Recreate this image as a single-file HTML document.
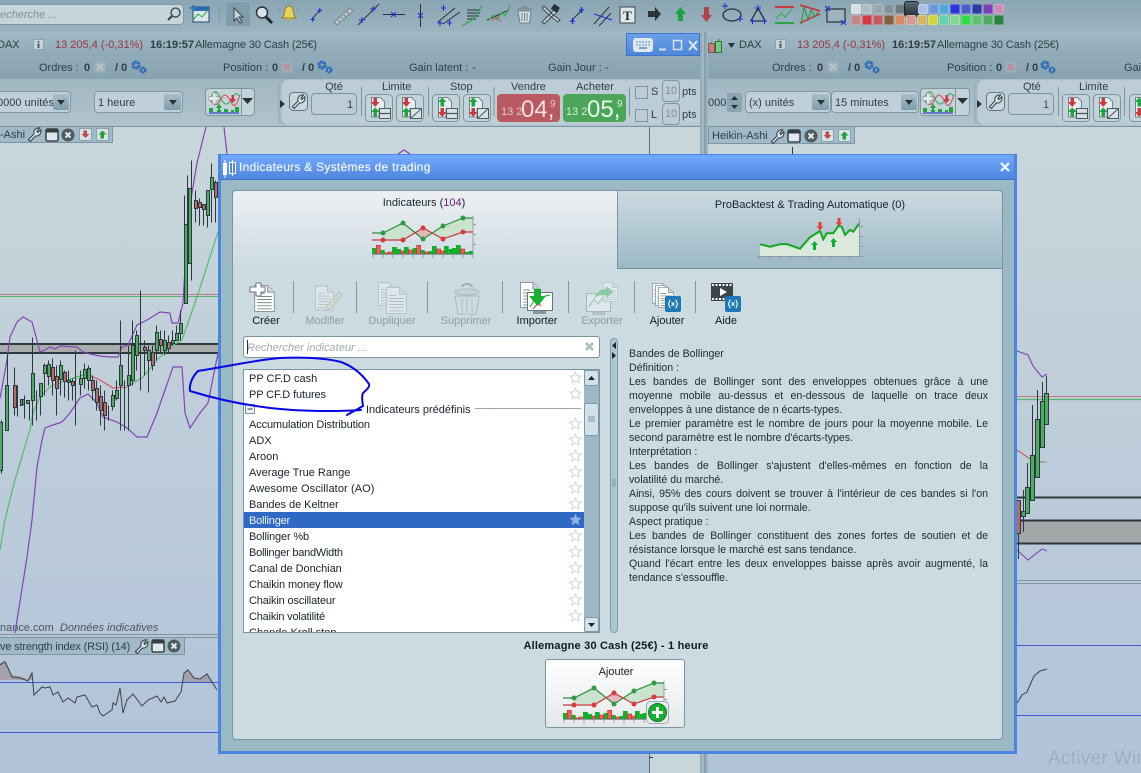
<!DOCTYPE html>
<html><head><meta charset="utf-8"><title>Indicateurs</title>
<style>
html,body{margin:0;padding:0;width:1141px;height:773px;overflow:hidden;background:#b8c9d6}
body{position:relative;font-family:"Liberation Sans",sans-serif;font-size:11px;color:#2f3e46}
.a,.t{position:absolute}
.t{white-space:nowrap;line-height:14px;font-size:11px}
.t,.lbl,.line{margin-top:1px}
svg{position:absolute;left:0;top:0;overflow:visible}
.b{font-weight:bold}
.sel{position:absolute;background:#c0d0d8;border:1px solid #7f99a5;border-radius:4px;box-sizing:border-box}
.drop{position:absolute;background:linear-gradient(#a9bfca,#7f9dac);border-radius:2px}
.drop:after{content:"";position:absolute;left:50%;top:50%;margin:-2px 0 0 -4px;border:4px solid transparent;border-top:5px solid #243138;border-bottom:0}
.box{position:absolute;border:1px solid #7c96a2;border-radius:4px;box-sizing:border-box}
.red{color:#9a3540}
.lbl{position:absolute;white-space:nowrap;line-height:14px;transform:translateX(-50%)}
.list{color:#18222c}
.dis{color:#8b9da6}
.line{position:absolute;left:629px;width:359px;line-height:14px;font-size:10.6px;color:#1d2933;text-align:justify;text-align-last:justify;white-space:nowrap}
.nj{text-align-last:left}
.pal{position:absolute;width:10px;height:10px;border-radius:2px;box-shadow:inset 0 0 0 1px rgba(255,255,255,.25)}
</style></head>
<body>

<!-- chrome bands -->
<div class="a" style="left:0;top:0;width:1141px;height:32px;background:linear-gradient(#8aa5b3,#9bb4c0)"></div>
<div class="a" style="left:0;top:32px;width:1141px;height:24px;background:linear-gradient(#a1bac6,#8ea9b6)"></div>
<div class="a" style="left:0;top:56px;width:1141px;height:23px;background:linear-gradient(#92acb9,#87a2b0)"></div>
<div class="a" style="left:0;top:79px;width:1141px;height:48px;background:linear-gradient(#a0b6c1,#b1c4cd)"></div>
<div class="a" style="left:0;top:126px;width:1141px;height:1px;background:#7b949f"></div>

<!-- chart backgrounds -->
<div class="a" style="left:0;top:127px;width:700px;height:646px;background:linear-gradient(#c9d6db,#b1c3d9)"></div>
<div class="a" style="left:708px;top:127px;width:433px;height:646px;background:linear-gradient(#c9d6db,#b1c3d9)"></div>
<div class="a" style="left:649px;top:127px;width:51px;height:646px;background:#c8d6dc;border-left:1px solid #5d7078;box-sizing:border-box"></div>
<div class="a" style="left:700px;top:32px;width:8px;height:741px;background:linear-gradient(90deg,#8ba5b2,#a9c0cb 40%,#7f9aa7 60%,#a9c0cb)"></div>

<!-- trade strips -->
<div class="a" style="left:278px;top:79px;width:422px;height:47px;background:#bccdd5;border-radius:8px 0 0 8px;box-shadow:inset 3px 0 2px #98b0bc"></div>
<div class="a" style="left:974px;top:79px;width:167px;height:47px;background:#bccdd5;border-radius:8px 0 0 8px;box-shadow:inset 3px 0 2px #98b0bc"></div>

<!-- charts -->
<svg width="1141" height="773" viewBox="0 0 1141 773">
  <!-- left -->
  <rect x="0" y="344" width="218" height="9" fill="#a9acac"/>
  <path d="M0 344H218M0 353H218" stroke="#2d393d" stroke-width="2" fill="none"/>
  <path d="M0 294.5H218" stroke="#c2787f"/><path d="M0 296.5H218" stroke="#58b56b"/>
  <path d="M0 634.5H649M0 637.5H649" stroke="#7f959d"/>
  <path d="M0 682.5H649M0 732.5H649" stroke="#4158d6"/>
  <path d="M0 398.5L7 360 10 337 17 322 23 317 32 322 35 333 40 352 45 350 50 347 55 349 60 346 77 347 83 352 90 354 100 356 110 357 118 357 122 347 128 345 137 325 147 320 160 312 170 313 172 323 178 323 183 303 188 217 197 163 206 127" fill="none" stroke="#8145b4" stroke-width="1.2"/>
  <path d="M15 633L27 557 32 520 37 467 42 440 45 428 53 425 62 422 70 413 80 398 88 394 97 403 103 417 117 422 127 428 137 437 147 437 157 413 165 390 173 367 182 367 185 413 190 428 200 413 208 403 218 353" fill="none" stroke="#8145b4" stroke-width="1.2"/>
  <path d="M224 127L227 154M398 154L404 150 410 154" fill="none" stroke="#8145b4" stroke-width="1.2"/>
  <path d="M0 550L5 520 13 487 23 453 30 430 33 413 40 397 50 387 67 380 87 374" fill="none" stroke="#54b96c" stroke-width="1.2"/>
  <path d="M87 374L100 380 113 388 127 387" fill="none" stroke="#d4566a" stroke-width="1.2"/>
  <path d="M127 387L143 377 157 360 170 347 182 340 197 297 218 232" fill="none" stroke="#54b96c" stroke-width="1.2"/>
  <g transform="translate(.5,.5)">
  <path d="M1 420V473M7 353V420M14 367V415M17 385V416M24 395V418M29 400V420M32 337V425M36 390V420M40 385V415M44 363V395M48 360V385M52 358V395M56 365V415M60 360V395M64 370V397M68 370V400M72 378V400M75 350V425M80 370V395M84 363V388M88 365V390M92 375V400M96 380V410M100 385V425M104 390V430M108 405V420M112 390V410M116 380V400M120 320V430M124 380V430M128 345V430M132 320V385M136 330V370M140 290V390M144 340V375M148 345V392M152 345V370M156 325V360M160 330V352M164 330V355M168 335V352M172 330V345M176 325V340M180 310V340M184 195V300M187 175V303M191 160V280M195 190V222M199 198V225M203 205V225M207 200V227M211 163V222M215 180V222" stroke="#2b383d" fill="none"/>
  <g fill="#4dac60" stroke="#2b383d">
    <rect x="-1" y="422" width="3" height="48"/><rect x="5" y="385" width="3" height="45"/><rect x="21" y="399" width="3" height="5"/><rect x="26" y="400" width="3" height="3"/><rect x="31" y="373" width="3" height="27"/><rect x="39" y="383" width="3" height="13"/><rect x="43" y="365" width="3" height="8"/><rect x="47" y="364" width="3" height="12"/><rect x="59" y="365" width="3" height="14"/><rect x="67" y="380" width="3" height="2"/><rect x="79" y="378" width="3" height="6"/><rect x="83" y="369" width="3" height="9"/><rect x="87" y="368" width="3" height="12"/><rect x="111" y="395" width="3" height="11"/><rect x="115" y="390" width="3" height="8"/><rect x="119" y="365" width="3" height="20"/><rect x="127" y="375" width="3" height="10"/><rect x="131" y="345" width="3" height="35"/><rect x="135" y="335" width="3" height="20"/><rect x="147" y="350" width="3" height="10"/><rect x="155" y="332" width="3" height="18"/><rect x="163" y="340" width="3" height="10"/><rect x="171" y="340" width="3" height="3"/><rect x="175" y="333" width="3" height="7"/><rect x="179" y="323" width="3" height="10"/><rect x="184" y="224" width="3" height="79"/><rect x="188" y="188" width="3" height="75"/><rect x="206" y="190" width="3" height="25"/><rect x="210" y="177" width="3" height="12"/>
  </g>
  <g fill="#b8696c" stroke="#2b383d">
    <rect x="13" y="385" width="3" height="22"/><rect x="20" y="399" width="2" height="6"/><rect x="51" y="367" width="3" height="13"/><rect x="55" y="376" width="3" height="12"/><rect x="63" y="372" width="3" height="9"/><rect x="71" y="381" width="3" height="4"/><rect x="91" y="380" width="3" height="10"/><rect x="95" y="388" width="3" height="14"/><rect x="99" y="396" width="3" height="14"/><rect x="103" y="402" width="3" height="13"/><rect x="143" y="347" width="3" height="3"/><rect x="151" y="352" width="3" height="13"/><rect x="159" y="339" width="3" height="6"/><rect x="167" y="342" width="3" height="6"/><rect x="194" y="200" width="3" height="8"/><rect x="198" y="202" width="3" height="5"/><rect x="202" y="204" width="3" height="5"/><rect x="214" y="182" width="3" height="15"/>
  </g>
  </g>
  <path d="M0 705H0V665L5 662 8 668 12 677 20 678 28 681 32 673 33 682H0Z" fill="#a7a1ab" transform="translate(0,-2)"/>
  <path d="M183 682L184 673 188 670 194 678 200 679 207 674 212 682Z" fill="#a7a1ab"/>
  <path d="M0 665L5 662 8 668 12 677 20 678 28 681 32 673 34 695 42 687 45 688 50 687 53 695 58 692 63 702 68 698 75 703 77 697 85 695 92 707 97 705 100 713 103 716 112 710 113 703 116 705 120 688 123 713 127 700 133 694 142 706 148 700 157 696 161 702 164 697 167 703 175 701 181 692 184 673 188 670 194 678 200 679 207 674 212 682 217 690" fill="none" stroke="#37444a"/>
  <!-- right -->
  <rect x="1016" y="520" width="125" height="24" fill="#a4a8a9"/>
  <path d="M1016 497.5H1141M1016 520.5H1141M1016 543.5H1141" stroke="#2d393d" stroke-width="2"/>
  <path d="M1016 396.5H1141" stroke="#c2787f"/><path d="M1016 399.5H1141" stroke="#58b56b" stroke-width="1.2"/>
  <path d="M1016 580.5H1141M1016 583.5H1141" stroke="#7f959d"/>
  <path d="M1016 645.5H1141M1016 715.5H1141" stroke="#4158d6"/>
  <path d="M1017 351L1028 355 1033 366 1042 377 1047 374" fill="none" stroke="#8145b4" stroke-width="1.1"/>
  <path d="M1017 450L1033 461 1043 462" fill="none" stroke="#c85a66" stroke-width="1.1"/><path d="M1043 462H1047" stroke="#54b96c"/>
  <path d="M1017 550L1028 560 1042 549 1047 551" fill="none" stroke="#8145b4" stroke-width="1.1"/>
  <path d="M1017 703L1022 695 1027 692 1030 685 1034 676 1040 671 1047 669" fill="none" stroke="#37444a"/>
  <path d="M1018.5 534V559M1023.5 490V532M1027.5 463V487M1032.5 405V455M1037.5 390V419M1042.5 382V401M1046.5 376V393" stroke="#2b383d" fill="none"/>
  <rect x="1016.5" y="500.5" width="4" height="33" fill="#b8696c" stroke="#2b383d"/>
  <g fill="#4dac60" stroke="#2b383d">
    <rect x="1021.5" y="511.5" width="4" height="5"/><rect x="1025.5" y="487.5" width="4" height="26"/><rect x="1030.5" y="455.5" width="4" height="45"/><rect x="1035.5" y="419.5" width="4" height="58"/><rect x="1040.5" y="401.5" width="4" height="46"/><rect x="1044.5" y="393.5" width="4" height="31"/>
  </g>
  <path d="M792.5 147V154" stroke="#2b383d"/>
  <path d="M649 757.5H653" stroke="#2b383d"/>
</svg>

<svg width="0" height="0" style="position:absolute">
<defs>
<symbol id="wr" viewBox="0 0 16 16" overflow="visible"><path d="M1.500 13.500L7.500 7.500C6.500 4 9 .5 13.500 1L10.500 4.500 11.500 6 14.800 3C15.500 7 12.500 10.500 9 9.500L3.500 15.500Z" fill="#dfe8ec" stroke="#2f3e46" stroke-width="1.100"/></symbol>
<symbol id="win" viewBox="0 0 14 14" overflow="visible"><rect x="1" y="1" width="12" height="12" rx="1.500" fill="#dfe8ec" stroke="#222d33" stroke-width="1.300"/><rect x="1" y="1" width="12" height="3.500" fill="#333f45"/></symbol>
<symbol id="xc" viewBox="0 0 14 14" overflow="visible"><circle cx="7" cy="7" r="6.500" fill="#4e5b61"/><path d="M4.500 4.500L9.500 9.500M9.500 4.500L4.500 9.500" stroke="#e3e9ec" stroke-width="2"/></symbol>
<symbol id="dn" viewBox="0 0 14 14" overflow="visible"><rect x=".5" y=".5" width="12" height="12" rx="1" fill="#d8e2e6" stroke="#8aa0aa"/><path d="M4.500 2.500H8V6H10.500L6.500 10 2.500 6H4.500Z" fill="#c0484e"/></symbol>
<symbol id="up" viewBox="0 0 14 14" overflow="visible"><rect x=".5" y=".5" width="12" height="12" rx="1" fill="#d8e2e6" stroke="#8aa0aa"/><path d="M6.500 2.500L10.500 6.500H8V10.500H4.500V6.500H2.500Z" fill="#1fa23a"/></symbol>
<symbol id="gear" viewBox="0 0 16 14" overflow="visible"><circle cx="5" cy="5" r="3" fill="none" stroke="#2a68bc" stroke-width="3" stroke-dasharray="2.400 .6"/><circle cx="12" cy="10" r="2.300" fill="none" stroke="#2a68bc" stroke-width="2.400" stroke-dasharray="2 .5"/></symbol>
<symbol id="inf" viewBox="0 0 11 11" overflow="visible"><rect x=".5" y=".5" width="10" height="10" fill="#c6d4da" stroke="#8da3ad"/><rect x="4.500" y="2" width="2" height="1.600" fill="#4f5d64"/><rect x="4.500" y="4.500" width="2" height="4.500" fill="#4f5d64"/></symbol>
<symbol id="xg" viewBox="0 0 12 12" overflow="visible"><rect x=".5" y=".5" width="11" height="11" fill="#9bb0ba"/><path d="M3 3L9 9M9 3L3 9" stroke="#b7c5cb" stroke-width="2.400"/></symbol>
<symbol id="xr" viewBox="0 0 12 12" overflow="visible"><rect x=".5" y=".5" width="11" height="11" fill="#9bb0ba"/><path d="M3 3L9 9M9 3L3 9" stroke="#c08f99" stroke-width="2.400"/></symbol>
<symbol id="st" viewBox="0 0 14 14" overflow="visible"><path d="M7 1L8.800 5.100 13 5.500 9.900 8.400 10.800 12.700 7 10.500 3.200 12.700 4.100 8.400 1 5.500 5.200 5.100Z" fill="#fff" stroke="#d3d9dc" stroke-width="1.200"/></symbol>
<symbol id="bt" viewBox="0 0 28 28" overflow="visible">
  <rect x=".5" y=".5" width="27" height="27" rx="4" fill="#c3d3da" stroke="#7c96a2"/>
  <path d="M6.500 3.500H15.500L19.500 7.500V15H14V23H6.500Z" fill="#e4ecef" stroke="#5a6b72" stroke-width=".8"/>
</symbol>
<symbol id="rg" viewBox="0 0 28 28" overflow="visible">
  <path d="M8.500 4H12V8H14.500L10.200 13 6 8H8.500Z" fill="#c9393e"/><path d="M10.200 13.500L14.500 18H12V22.500H8.500V18H6Z" fill="#1ea43c"/>
</symbol>
<symbol id="gr" viewBox="0 0 28 28" overflow="visible">
  <path d="M10.200 3.500L14.500 8H12V12.500H8.500V8H6Z" fill="#1ea43c"/><path d="M8.500 14H12V18H14.500L10.200 23 6 18H8.500Z" fill="#c9393e"/>
</symbol>
<symbol id="eq" viewBox="0 0 28 28" overflow="visible"><rect x="14.500" y="14.500" width="11" height="10" fill="#d8e2e6" stroke="#4a5b63"/><path d="M14.500 19.500H25.500" stroke="#4a5b63" stroke-width="1.300"/></symbol>
<symbol id="sl" viewBox="0 0 28 28" overflow="visible"><rect x="14.500" y="14.500" width="11" height="10" fill="#d8e2e6" stroke="#4a5b63"/><path d="M14.500 24.500L25.500 14.500" stroke="#4a5b63"/></symbol>
<symbol id="cb" viewBox="0 0 34 28" overflow="visible">
  <path d="M4 9C7 2 10 2 13 9S20 19 24 12 29 4 33 8" fill="none" stroke="#2fae4a" stroke-width="1"/>
  <path d="M4 13C8 19 11 17 14 11S20 6 24 14 30 15 33 7" fill="none" stroke="#cf4a4e" stroke-width="1"/>
  <path d="M2 8.500H5.500V5H9V8.500H12V12.500H9V16H5.500V12.500H2Z" fill="#e4ecef" stroke="#8a979e" stroke-width=".7"/>
  <path d="M11 20H9L12 15.500 15 20H13V23H11Z" fill="#1ea43c"/><path d="M24.500 7H27V11H29L25.700 15 22.500 11H24.500Z" fill="#c9393e"/>
  <path d="M2 20H6V24H2ZM10 22H14V24H10ZM17 21H21V24H17ZM24 22H27V24H24ZM28 19H32V24H28Z" fill="#22a340"/>
  <path d="M2 25H32" stroke="#2a45c8" stroke-width="1.200"/>
</symbol>
<symbol id="mini" viewBox="372 216 102 42" overflow="visible">
  <path d="M383 233L403 223 413 231 423 239 433 233 443 226 463 218H473V232H463L443 239 423 228 403 240 383 240Z" fill="#c9e3cf"/>
  <path d="M415 233L423 228 431 233 423 239Z" fill="#e5b9bb"/>
  <path d="M372 233H383L403 223 423 239 443 226 463 218H473" fill="none" stroke="#2c8f3c" stroke-width="1.200"/>
  <path d="M372 240H403L423 228 443 239 463 232H473" fill="none" stroke="#c33b3f" stroke-width="1.200"/>
  <g fill="#2f9a42"><circle cx="383" cy="233" r="2.500"/><circle cx="403" cy="223" r="2.500"/><circle cx="423" cy="239" r="2.500"/><circle cx="443" cy="226" r="2.500"/><circle cx="463" cy="218" r="2.500"/></g>
  <g fill="#d63b40"><circle cx="383" cy="240" r="2.500"/><circle cx="403" cy="240" r="2.500"/><circle cx="423" cy="228" r="2.500"/><circle cx="443" cy="239" r="2.500"/><circle cx="463" cy="232" r="2.500"/></g>
  <g fill="#12b02a"><rect x="372" y="248" width="4" height="6"/><rect x="380.700" y="250" width="4" height="4"/><rect x="392" y="247" width="5" height="7"/><rect x="397" y="249" width="4" height="5"/><rect x="404" y="247" width="4.700" height="7"/><rect x="412.700" y="248" width="4" height="6"/><rect x="420.700" y="250" width="4" height="4"/><rect x="428.700" y="251" width="3.300" height="3"/><rect x="432" y="246" width="4.700" height="8"/><rect x="444" y="246" width="4.700" height="8"/><rect x="448.700" y="249" width="3.300" height="5"/><rect x="452" y="248" width="4" height="6"/><rect x="456" y="245" width="4.700" height="9"/><rect x="464.700" y="252" width="4" height="2"/><rect x="468.700" y="251" width="4.300" height="3"/></g>
  <g fill="#f25a5a" stroke="#c22a2a" stroke-width=".6"><rect x="376.300" y="245.300" width="4" height="8.700"/><rect x="384.700" y="253" width="3.300" height="1"/><rect x="388" y="252" width="3.500" height="2"/><rect x="401" y="251" width="3" height="3"/><rect x="408.700" y="250" width="4" height="4"/><rect x="416.700" y="245.300" width="4" height="8.700"/><rect x="424.700" y="252" width="4" height="2"/><rect x="436.700" y="249" width="4" height="5"/><rect x="440.700" y="251" width="3.300" height="3"/><rect x="460.700" y="249" width="4" height="5"/></g>
  <path d="M372 254.500H473M473 216V254.500M473 224.500H476M473 234.500H476M473 244.500H476M373 254V258M383 254V258M393 254V258M403 254V258M413 254V258M423 254V258M433 254V258M443 254V258M453 254V258M463 254V258M473 254V258" stroke="#8c9aa2" fill="none" stroke-width=".9"/>
</symbol>
<symbol id="doc" viewBox="0 0 20 26" overflow="visible"><path d="M.5 .5H13L19.500 7V25.500H.5Z" fill="#fff" stroke="#8a979e"/><path d="M13 .5V7H19.500" fill="#ccd6db" stroke="#8a979e"/><path d="M3 8H10M3 11H17M3 14H17M3 17H17M3 20H17M3 23H17" stroke="#6a767c" stroke-width=".8"/></symbol>
<symbol id="badge" viewBox="0 0 16 16" overflow="visible"><rect width="16" height="16" rx="2" fill="#1f79b8"/><path d="M5.500 4C3.500 4 5 8 3 8 5 8 3.500 12 5.500 12M10.500 4C12.500 4 11 8 13 8 11 8 12.500 12 10.500 12" fill="none" stroke="#fff" stroke-width="1"/><path d="M6.500 6L9.500 10M9.500 6L6.500 10" stroke="#fff" stroke-width="1"/></symbol>
</defs>
</svg>

<!-- top toolbar -->
<div class="a" style="left:-6px;top:4px;width:190px;height:21px;background:#c6d5db;border:1px solid #7f99a5;border-radius:4px;box-sizing:border-box"></div>
<div class="t" style="left:0;top:7px;font-style:italic;color:#7f8f97">echerche ...</div>
<div class="a" style="left:225px;top:1px;width:26px;height:26px;background:#7f9dab;border:1px solid #95aeba;box-sizing:border-box"></div>
<svg width="1141" height="32">
  <circle cx="175.500" cy="12.500" r="4.500" fill="none" stroke="#333f45" stroke-width="1.300"/><path d="M172 16L168 20" stroke="#333f45" stroke-width="2"/>
  <rect x="193" y="7" width="16" height="15" fill="#dbe6ea" stroke="#204a78"/><rect x="193" y="7" width="16" height="4" fill="#2a6db0"/><path d="M193 20L198 14 202 17 208 10" fill="none" stroke="#2aa84a"/><path d="M190 8H196M193 5V11" stroke="#2f7dbf" stroke-width="2"/>
  <path d="M219.500 6V22" stroke="#7f99a5"/>
  <path d="M234 8V21L237 18 240 23 242 22 239 17H243Z" fill="#c9d4d9" stroke="#39464c"/>
  <circle cx="262" cy="12.500" r="5.500" fill="#d5e2e8" stroke="#2a3338" stroke-width="1.500"/><path d="M266 17L272 23" stroke="#1f272b" stroke-width="2.800"/>
  <path d="M289 6C285 6 285 10 284 15L282 18H296L294 15C293 10 293 6 289 6Z" fill="#e7d25a" stroke="#8f7f2a"/><rect x="287" y="18" width="4" height="2.500" fill="#c9ae33"/><path d="M281 8L279 11M297 8L299 11" stroke="#7f8f97"/>
  <g stroke="#1e2bd6" fill="none"><path d="M312 19L320 10" stroke="#2a3a6a"/><path d="M310.500 19.500H315M312.800 17V22M317.500 10.500H322M319.800 8V13"/></g>
  <path d="M334 22L350 8 353 11 337 25Z" fill="#b7c7cd" stroke="#76868d"/><path d="M338 20L340 22M341 17L343 19M344 15L346 17M347 12L349 14" stroke="#76868d"/>
  <path d="M358 25L379 4" stroke="#26323a"/><path d="M359 20H365M362 17V23M370 9H376M373 6V12" stroke="#1e2bd6"/>
  <path d="M383 14.500H405" stroke="#26323a"/><path d="M391 12L396 17M396 12L391 17" stroke="#1e2bd6"/>
  <path d="M420.500 4V27" stroke="#26323a"/><path d="M418 13L423 18M423 13L418 18" stroke="#1e2bd6"/>
  <path d="M438 22L455 8M443 24L460 12" stroke="#26323a"/><path d="M437 23H443M440 20V26M447 23H452M449.500 20V26M441 8H446M443.500 5V11" stroke="#1e2bd6"/>
  <path d="M467 10H480M467 13H480M467 16H479M467 19H476" stroke="#26323a"/><path d="M462 26L472 20 482 6" fill="none" stroke="#2fae4a" stroke-width="1.200"/>
  <path d="M487 20L509 10" stroke="#26323a"/><path d="M488 21L493 15 497 20 502 12 505 16 510 6" fill="none" stroke="#2fae4a"/><path d="M492 21L497 17 501 22" fill="none" stroke="#c9565a"/>
  <path d="M518 11H531L529.500 23H520Z" fill="#d5dfe3" stroke="#6f7f86"/><path d="M517 9H532M522 9V7H527V9M522 13V21M524.500 13V21M527 13V21" stroke="#6f7f86" fill="none"/>
  <path d="M542 8L550 16 558 22 560 20 552 14 544 6ZM557 7L546 18 542 22 544 24 558 11Z" fill="#c9d4d9" stroke="#39464c"/><rect x="552" y="5" width="7" height="6" fill="#26323a" transform="rotate(35 555 8)"/>
  <path d="M572 20L582 10" stroke="#26323a"/><path d="M570 21H575M572.500 18V24M579 10H584M581.500 7V13" stroke="#1e2bd6" stroke-width="1.300"/>
  <path d="M594 24L609 7M599 26L611 13" stroke="#26323a"/><path d="M594 14L612 20" stroke="#1e2bd6"/>
  <rect x="620" y="7" width="15" height="16" fill="#dfe8ec" stroke="#39464c"/><text x="627.500" y="20" font-family="Liberation Serif,serif" font-size="13" font-weight="bold" fill="#222d33" text-anchor="middle">T</text>
  <path d="M648 11H655V7L661 14 655 21V17H648Z" fill="#2a3338"/>
  <path d="M680.500 7L686 14H683V21H678V14H675Z" fill="#1ea43c"/>
  <path d="M704 7H709V15H712L706.500 22 701 15H704Z" fill="#b04348"/>
  <ellipse cx="732" cy="15" rx="9" ry="6" fill="none" stroke="#26323a" stroke-width="1.300"/><path d="M722 6H728M725 3V9M737 19H743M740 16V22" stroke="#1e2bd6"/>
  <path d="M758 8L751 21H765Z" fill="none" stroke="#26323a" stroke-width="1.300"/><path d="M755 8H761M758 5V11M750 21H755M752.500 18V24M762 21H767M764.500 18V24" stroke="#1e2bd6"/>
  <path d="M775 7H794" stroke="#d02a30" stroke-width="1.800"/><path d="M775 23H794" stroke="#1fa23a" stroke-width="1.800"/><path d="M776 19L781 13 785 17 792 9" fill="none" stroke="#2fae4a"/>
  <path d="M800 5L820 11M800 23L820 14" stroke="#d02a30" stroke-width="1.500"/><path d="M801 24L804 7 808 20 811 10 815 17 818 12" fill="none" stroke="#1f9a3a"/>
  <rect x="827" y="9" width="18" height="13" fill="#9fb4bf" stroke="#26323a" stroke-width="1.200"/><path d="M825 6L830 11M830 6L825 11M841 20L846 25M846 20L841 25" stroke="#1e2bd6"/>
</svg>
<!-- palette -->
<div class="pal" style="left:851px;top:4px;background:#d6e0e4"></div><div class="pal" style="left:862px;top:4px;background:#afbbc0"></div><div class="pal" style="left:873px;top:4px;background:#99a7ad"></div><div class="pal" style="left:884px;top:4px;background:#83929a"></div><div class="pal" style="left:895px;top:4px;background:#6d7c84"></div>
<div class="pal" style="left:905px;top:2px;width:13px;height:14px;background:linear-gradient(#5a6870,#26323a);box-shadow:0 0 0 1px #1a2328"></div>
<div class="pal" style="left:918px;top:4px;background:#a9bfe3"></div><div class="pal" style="left:929px;top:4px;background:#6c96dc"></div><div class="pal" style="left:939px;top:4px;background:#4fa7da"></div><div class="pal" style="left:950px;top:4px;background:#2c36dc"></div><div class="pal" style="left:961px;top:4px;background:#4d5dc8"></div><div class="pal" style="left:972px;top:4px;background:#2b3aa0"></div><div class="pal" style="left:983px;top:4px;background:#7a3db4"></div><div class="pal" style="left:994px;top:4px;background:#cc8ab8"></div>
<div class="pal" style="left:851px;top:15px;background:#c5838a"></div><div class="pal" style="left:862px;top:15px;background:#d03a40"></div><div class="pal" style="left:873px;top:15px;background:#c25a60"></div><div class="pal" style="left:884px;top:15px;background:#80603f"></div><div class="pal" style="left:895px;top:15px;background:#d48a60"></div><div class="pal" style="left:906px;top:15px;background:#d29a92"></div><div class="pal" style="left:917px;top:15px;background:#d4b460"></div><div class="pal" style="left:928px;top:15px;background:#d4d63e"></div><div class="pal" style="left:939px;top:15px;background:#62d2b0"></div><div class="pal" style="left:950px;top:15px;background:#84d690"></div><div class="pal" style="left:961px;top:15px;background:#2fdc44"></div><div class="pal" style="left:972px;top:15px;background:#62bd70"></div><div class="pal" style="left:983px;top:15px;background:#4fa862"></div><div class="pal" style="left:994px;top:15px;background:#2a823e"></div>

<!-- title rows -->
<div class="t" style="left:-3px;top:37px;font-size:11px">DAX</div>
<div class="t red" style="left:55px;top:37px">13 205,4 (-0,31%)</div>
<div class="t b" style="left:150px;top:37px">16:19:57</div>
<div class="t" style="left:195px;top:37px;letter-spacing:-.12px">Allemagne 30 Cash (25€)</div>
<div class="t" style="left:739px;top:37px">DAX</div>
<div class="t red" style="left:797px;top:37px">13 205,4 (-0,31%)</div>
<div class="t b" style="left:892px;top:37px">16:19:57</div>
<div class="t" style="left:937px;top:37px;letter-spacing:-.12px">Allemagne 30 Cash (25€)</div>

<div class="a" style="left:626px;top:33px;width:74px;height:23px;background:linear-gradient(#6a9fe8,#4e88d8);border:1px solid #3f74c8;box-sizing:border-box"></div>
<svg width="1141" height="60">
  <use href="#inf" x="33" y="39" width="11" height="11"/><use href="#inf" x="775" y="39" width="11" height="11"/>
  <rect x="633" y="38" width="20" height="14" rx="3" fill="#dfe8ec"/><path d="M636 42H650M636 45H650" stroke="#5a8cd0" stroke-dasharray="2 1"/><path d="M639 48H647" stroke="#5a8cd0" stroke-width="1.500"/>
  <path d="M659 49.500H666" stroke="#d4e2ee" stroke-width="2"/><rect x="673.500" y="40.500" width="8" height="9" fill="none" stroke="#d4e2ee" stroke-width="1.500"/><path d="M689 41L697 50M697 41L689 50" stroke="#e4edf3" stroke-width="1.800"/>
  <path d="M711.500 42V50M719 39V53" stroke="#7f5050"/><rect x="708.500" y="44.500" width="6" height="9" fill="#cd7c7c" stroke="#7f5050" transform="translate(0,-1)"/><rect x="715.500" y="41.500" width="6" height="11" fill="#6fcf7f" stroke="#2f6f3f"/>
  <path d="M728 43H735L731.500 48Z" fill="#2a3338"/>
</svg>

<div class="t" style="left:39px;top:60px">Ordres :</div><div class="t b" style="left:84px;top:60px">0</div><div class="t b" style="left:115px;top:60px">/ 0</div>
<div class="t" style="left:223px;top:60px">Position :</div><div class="t b" style="left:272px;top:60px">0</div><div class="t b" style="left:302px;top:60px">/ 0</div>
<div class="t" style="left:409px;top:60px">Gain latent :</div><div class="t" style="left:472px;top:60px">-</div>
<div class="t" style="left:548px;top:60px">Gain Jour :</div><div class="t" style="left:605px;top:60px">-</div>
<div class="t" style="left:772px;top:60px">Ordres :</div><div class="t b" style="left:817px;top:60px">0</div><div class="t b" style="left:848px;top:60px">/ 0</div>
<div class="t" style="left:947px;top:60px">Position :</div><div class="t b" style="left:996px;top:60px">0</div><div class="t b" style="left:1026px;top:60px">/ 0</div>
<div class="t" style="left:1124px;top:60px">Gain</div>
<svg width="1141" height="80">
  <use href="#xg" x="94" y="61" width="12" height="12"/><use href="#xr" x="281" y="61" width="12" height="12"/><use href="#xg" x="827" y="61" width="12" height="12"/><use href="#xr" x="1005" y="61" width="12" height="12"/>
  <use href="#gear" x="131" y="60" width="16" height="14"/><use href="#gear" x="317" y="60" width="16" height="14"/><use href="#gear" x="864" y="60" width="16" height="14"/><use href="#gear" x="1040" y="60" width="16" height="14"/>
</svg>

<!-- trade controls, left -->
<div class="sel" style="left:-6px;top:91px;width:77px;height:22px"></div><div class="t" style="left:-3px;top:95px">0000 unités</div><div class="drop" style="left:53px;top:94px;width:16px;height:16px"></div>
<div class="sel" style="left:94px;top:91px;width:89px;height:22px"></div><div class="t" style="left:98px;top:95px">1 heure</div><div class="drop" style="left:164px;top:94px;width:17px;height:16px"></div>
<div class="box" style="left:205px;top:88px;width:50px;height:28px;background:#c3d3da"></div>
<div class="t" style="left:322px;top:79px;width:24px;text-align:center">Qté</div>
<div class="box" style="left:311px;top:93px;width:46px;height:22px"></div><div class="t" style="left:347px;top:97px">1</div>
<div class="t" style="left:382px;top:79px">Limite</div><div class="t" style="left:450px;top:79px">Stop</div>
<div class="t" style="left:511px;top:79px;font-size:11px">Vendre</div><div class="t" style="left:576px;top:79px">Acheter</div>
<div class="a" style="left:497px;top:94px;width:63px;height:28px;background:#b85a60;border-radius:4px"></div>
<div class="t" style="left:501px;top:104px;color:#e4c8ca;font-size:11px">13 2</div><div class="t" style="left:521px;top:97px;color:#f0dfe0;font-size:24px;line-height:24px">04,</div><div class="t" style="left:550px;top:97px;color:#e4c8ca;font-size:10px">9</div>
<div class="a" style="left:563px;top:94px;width:63px;height:28px;background:#4ba65a;border-radius:4px"></div>
<div class="t" style="left:566px;top:104px;color:#d9eedd;font-size:11px">13 2</div><div class="t" style="left:587px;top:97px;color:#ebf6ec;font-size:24px;line-height:24px">05,</div><div class="t" style="left:617px;top:97px;color:#d9eedd;font-size:10px">9</div>
<div class="a" style="left:635px;top:86px;width:11px;height:11px;border:1px solid #7c96a2"></div><div class="t" style="left:651px;top:84px">S</div>
<div class="a" style="left:635px;top:109px;width:11px;height:11px;border:1px solid #7c96a2"></div><div class="t" style="left:651px;top:107px">L</div>
<div class="box" style="left:662px;top:80px;width:18px;height:22px;color:#7d8e96;text-align:center;line-height:20px">10</div>
<div class="box" style="left:662px;top:103px;width:18px;height:22px;color:#7d8e96;text-align:center;line-height:20px">10</div>
<div class="t" style="left:682px;top:84px">pts</div><div class="t" style="left:682px;top:107px">pts</div>

<!-- trade controls, right -->
<div class="t" style="left:708px;top:95px">000</div>
<div class="a" style="left:727px;top:93px;width:15px;height:19px;background:#8ba5b2;border-radius:2px"></div>
<div class="sel" style="left:745px;top:91px;width:86px;height:22px"></div><div class="t" style="left:749px;top:95px">(x) unités</div><div class="drop" style="left:812px;top:94px;width:17px;height:16px"></div>
<div class="sel" style="left:831px;top:91px;width:88px;height:22px"></div><div class="t" style="left:835px;top:95px">15 minutes</div><div class="drop" style="left:901px;top:94px;width:16px;height:16px"></div>
<div class="box" style="left:920px;top:88px;width:50px;height:28px;background:#c3d3da"></div>
<div class="t" style="left:1023px;top:79px">Qté</div>
<div class="box" style="left:1008px;top:93px;width:46px;height:22px"></div><div class="t" style="left:1043px;top:97px;color:#5f3a5f">1</div>
<div class="t" style="left:1079px;top:79px">Limite</div>

<svg width="1141" height="130">
  <g>
    <use href="#cb" x="207" y="88" width="34" height="28"/>
    <path d="M241.500 88V116" stroke="#7c96a2"/><path d="M242 98H253L247.500 104Z" fill="#2a3338"/>
    <use href="#cb" x="921" y="88" width="34" height="28"/>
    <path d="M955.500 88V116" stroke="#7c96a2"/><path d="M957 98H968L962.500 104Z" fill="#2a3338"/>
    <path d="M280 100L285 104 280 108ZM977 100L982 104 977 108Z" fill="#26323a"/>
    <rect x="289.500" y="92.500" width="18" height="18" rx="4" fill="#c9d8df" stroke="#5f7580"/><use href="#wr" x="291" y="94" width="15" height="15"/>
    <rect x="986.500" y="92.500" width="18" height="18" rx="4" fill="#c9d8df" stroke="#5f7580"/><use href="#wr" x="988" y="94" width="15" height="15"/>
    <path d="M361.500 87V116M428.500 87V116M494 87V116M629.500 87V116M1058.500 87V116M1124.500 87V116" stroke="#7c96a2"/>
    <use href="#bt" x="365" y="94" width="28" height="28"/><use href="#rg" x="365" y="94" width="28" height="28"/><use href="#eq" x="365" y="94" width="28" height="28"/>
    <use href="#bt" x="396" y="94" width="28" height="28"/><use href="#rg" x="396" y="94" width="28" height="28"/><use href="#sl" x="396" y="94" width="28" height="28"/>
    <use href="#bt" x="432" y="94" width="28" height="28"/><use href="#gr" x="432" y="94" width="28" height="28"/><use href="#eq" x="432" y="94" width="28" height="28"/>
    <use href="#bt" x="463" y="94" width="28" height="28"/><use href="#gr" x="463" y="94" width="28" height="28"/><use href="#sl" x="463" y="94" width="28" height="28"/>
    <use href="#bt" x="1062" y="94" width="28" height="28"/><use href="#rg" x="1062" y="94" width="28" height="28"/><use href="#eq" x="1062" y="94" width="28" height="28"/>
    <use href="#bt" x="1093" y="94" width="28" height="28"/><use href="#rg" x="1093" y="94" width="28" height="28"/><use href="#sl" x="1093" y="94" width="28" height="28"/>
    <use href="#bt" x="1129" y="94" width="28" height="28"/><use href="#gr" x="1129" y="94" width="28" height="28"/>
    <path d="M734.500 96L738 100H731ZM731 105H738L734.500 109Z" fill="#26323a"/>
  </g>
</svg>

<!-- legends -->
<div class="a" style="left:0;top:127px;width:113px;height:16px;background:#a0bac7;border:1px solid #7c96a2;border-top:0;border-left:0;box-sizing:border-box"></div>
<div class="t" style="left:0;top:127px">-Ashi</div>
<div class="a" style="left:708px;top:127px;width:147px;height:17px;background:#a0bac7;border:1px solid #7c96a2;border-top:0;box-sizing:border-box"></div>
<div class="t" style="left:712px;top:128px">Heikin-Ashi</div>
<div class="a" style="left:0;top:637px;width:185px;height:18px;background:#a0bac7;border:1px solid #7c96a2;border-left:0;box-sizing:border-box"></div>
<div class="t" style="left:0;top:639px;font-size:11px;letter-spacing:-.18px">ve strength index (RSI) (14)</div>
<div class="t" style="left:0;top:620px;font-size:11px;color:#48565d">nance.com&nbsp; <i>Données indicatives</i></div>
<svg width="1141" height="773">
  <use href="#wr" x="27" y="127" width="15" height="15"/><use href="#win" x="45" y="128" width="14" height="14"/><use href="#xc" x="61" y="128" width="14" height="14"/><use href="#dn" x="79" y="128" width="14" height="14"/><use href="#up" x="96" y="128" width="14" height="14"/>
  <use href="#wr" x="770" y="129" width="15" height="15"/><use href="#win" x="787" y="129" width="14" height="14"/><use href="#xc" x="804" y="129" width="14" height="14"/><use href="#dn" x="821" y="129" width="14" height="14"/><use href="#up" x="838" y="129" width="14" height="14"/>
  <use href="#wr" x="134" y="639" width="15" height="15"/><use href="#win" x="151" y="639" width="14" height="14"/><use href="#xc" x="167" y="639" width="14" height="14"/>
</svg>

<div class="t" style="left:1048px;top:747px;font-size:19px;line-height:22px;color:#a0aebb;letter-spacing:.3px">Activer Windows</div>

<!-- dialog -->
<div class="a" style="left:218px;top:154px;width:799px;height:600px;background:#9bb8c5;border:3px solid #4a86e0;box-sizing:border-box"></div>
<div class="a" style="left:221px;top:155px;width:793px;height:24px;background:linear-gradient(#73a9ff,#4f86de);border-bottom:1px solid #3f74c8"></div>
<div class="a" style="left:232px;top:190px;width:771px;height:550px;background:#ccdae2;border:1px solid #7b949f;border-radius:4px;box-sizing:border-box"></div>
<div class="a" style="left:232px;top:190px;width:386px;height:79px;background:linear-gradient(#edf0f3,#ccdae2);border:1px solid #7b949f;border-bottom:0;border-radius:4px 0 0 0;box-sizing:border-box"></div>
<div class="a" style="left:617px;top:190px;width:386px;height:79px;background:linear-gradient(#cbdae1,#9cb9c6);border:1px solid #7b949f;border-radius:0 4px 0 0;box-sizing:border-box"></div>

<div class="t" style="left:239px;top:159px;color:#eef4fc;font-size:12px;letter-spacing:.27px;text-shadow:0 0 .6px #fff">Indicateurs &amp; Systèmes de trading</div>
<div class="lbl" style="left:424px;top:195px;color:#18222c">Indicateurs (<span style="color:#6b1d6b">104</span>)</div>
<div class="lbl" style="left:810px;top:197px;color:#18222c">ProBacktest &amp; Trading Automatique (0)</div>

<div class="lbl" style="left:266px;top:313px;color:#111a20">Créer</div>
<div class="lbl dis" style="left:325px;top:313px">Modifier</div>
<div class="lbl dis" style="left:392px;top:313px">Dupliquer</div>
<div class="lbl dis" style="left:466px;top:313px">Supprimer</div>
<div class="lbl" style="left:537px;top:313px;color:#111a20">Importer</div>
<div class="lbl dis" style="left:602px;top:313px">Exporter</div>
<div class="lbl" style="left:667px;top:313px;color:#111a20">Ajouter</div>
<div class="lbl" style="left:726px;top:313px;color:#111a20">Aide</div>

<!-- search + list -->
<div class="a" style="left:243px;top:336px;width:357px;height:22px;background:#fff;border:1px solid #7b949f;border-radius:3px;box-sizing:border-box"></div>
<div class="t" style="left:247px;top:340px;font-style:italic;color:#a2abb0">Rechercher indicateur ...</div>
<div class="a" style="left:247px;top:340px;width:1px;height:14px;background:#2a3338"></div>
<div class="a" style="left:243px;top:369px;width:357px;height:264px;background:#fff;border:1px solid #7b949f;box-sizing:border-box;overflow:hidden"></div>
<div class="a" style="left:584px;top:370px;width:15px;height:262px;background:#9bb8c5"></div>
<div class="a" style="left:244px;top:512px;width:340px;height:16px;background:#3069c4"></div>

<div class="t list" style="left:249px;top:371px">PP CF.D cash</div>
<div class="t list" style="left:249px;top:387px;letter-spacing:-.12px">PP CF.D futures</div>
<div class="t list" style="left:366px;top:402px">Indicateurs prédéfinis</div>
<div class="t list" style="left:249px;top:417px;letter-spacing:-.13px">Accumulation Distribution</div>
<div class="t list" style="left:249px;top:433px">ADX</div>
<div class="t list" style="left:249px;top:449px">Aroon</div>
<div class="t list" style="left:249px;top:465px">Average True Range</div>
<div class="t list" style="left:249px;top:481px;letter-spacing:.1px">Awesome Oscillator (AO)</div>
<div class="t list" style="left:249px;top:497px;letter-spacing:-.05px">Bandes de Keltner</div>
<div class="t" style="left:249px;top:513px;color:#eef3fa;letter-spacing:-.2px">Bollinger</div>
<div class="t list" style="left:249px;top:529px;letter-spacing:-.15px">Bollinger %b</div>
<div class="t list" style="left:249px;top:545px;letter-spacing:-.25px">Bollinger bandWidth</div>
<div class="t list" style="left:249px;top:561px;letter-spacing:-.05px">Canal de Donchian</div>
<div class="t list" style="left:249px;top:577px;letter-spacing:-.1px">Chaikin money flow</div>
<div class="t list" style="left:249px;top:593px;letter-spacing:-.15px">Chaikin oscillateur</div>
<div class="t list" style="left:249px;top:609px;letter-spacing:-.2px">Chaikin volatilité</div>
<div class="a" style="left:244px;top:625px;width:330px;height:7px;overflow:hidden"><div class="t list" style="left:5px;top:0">Chande Kroll stop</div></div>

<!-- description -->
<div class="line nj" style="top:346px">Bandes de Bollinger</div>
<div class="line nj" style="top:360px">Définition :</div>
<div class="line" style="top:374px">Les bandes de Bollinger sont des enveloppes obtenues grâce à une</div>
<div class="line" style="top:388px">moyenne mobile au-dessus et en-dessous de laquelle on trace deux</div>
<div class="line nj" style="top:402px">enveloppes à une distance de n écarts-types.</div>
<div class="line" style="top:416px">Le premier paramètre est le nombre de jours pour la moyenne mobile. Le</div>
<div class="line nj" style="top:430px">second paramètre est le nombre d'écarts-types.</div>
<div class="line nj" style="top:444px">Interprétation :</div>
<div class="line" style="top:458px">Les bandes de Bollinger s'ajustent d'elles-mêmes en fonction de la</div>
<div class="line nj" style="top:472px">volatilité du marché.</div>
<div class="line" style="top:486px">Ainsi, 95% des cours doivent se trouver à l'intérieur de ces bandes si l'on</div>
<div class="line nj" style="top:500px">suppose qu'ils suivent une loi normale.</div>
<div class="line nj" style="top:514px">Aspect pratique :</div>
<div class="line" style="top:528px">Les bandes de Bollinger constituent des zones fortes de soutien et de</div>
<div class="line nj" style="top:542px">résistance lorsque le marché est sans tendance.</div>
<div class="line" style="top:556px">Quand l'écart entre les deux enveloppes baisse après avoir augmenté, la</div>
<div class="line nj" style="top:570px">tendance s'essouffle.</div>

<div class="lbl b" style="left:616px;top:638px;color:#111a20;letter-spacing:.2px">Allemagne 30 Cash (25€) - 1 heure</div>
<div class="a" style="left:545px;top:659px;width:140px;height:69px;background:linear-gradient(#fff,#e4e8ea);border:1px solid #7b949f;border-radius:3px;box-sizing:border-box"></div>
<div class="lbl" style="left:616px;top:664px;color:#18222c">Ajouter</div>

<svg width="1141" height="773">
  <!-- dialog title icons -->
  <path d="M223 163H227V175H223Z" fill="#fff"/><rect x="229.500" y="162.500" width="6" height="11" fill="#4f86de" stroke="#fff"/><path d="M225 160V178M232.500 160V176" stroke="#fff"/>
  <path d="M1001 163L1009 171M1009 163L1001 171" stroke="#f2f6fc" stroke-width="2.200"/>
  <!-- mini charts -->
  <use href="#mini" x="372" y="216" width="102" height="42"/>
  <use href="#mini" x="563" y="681" width="102" height="42"/>
  <rect x="646.500" y="701.500" width="22" height="22" rx="4" fill="#e8ecee" stroke="#9aa9b1"/><circle cx="657.500" cy="712.500" r="9" fill="#18b030" stroke="#0e7a20"/><path d="M652 712.500H663M657.500 707V718" stroke="#fff" stroke-width="3"/>
  <!-- backtest chart -->
  <path d="M760 244.300L770 246.700 780 244.300 786.700 244 800 248.700 810 237.300 820 231 823.300 239.300 826.700 233.300 833.300 233.300 838.300 226 841.700 226.700 845 235 850 230 853.300 231.700 859.300 223.300V256H760Z" fill="#dbe8dc"/>
  <path d="M760 244.300L770 246.700 780 244.300 786.700 244 800 248.700 810 237.300 820 231 823.300 239.300 826.700 233.300 833.300 233.300 838.300 226 841.700 226.700 845 235 850 230 853.300 231.700 859.300 223.300" fill="none" stroke="#17a520" stroke-width="2"/>
  <path d="M757 256.500H863M859.500 218V256M859 226.500H863M859 236.500H863M859 246.500H863M760 256V260M770 256V260M780 256V260M790 256V260M800 256V260M810 256V260M820 256V260M830 256V260M840 256V260M850 256V260" stroke="#8c9aa2" fill="none" stroke-width=".9"/>
  <path d="M818.500 222H821.500V226.500H823.500L820 230 816.500 226.500H818.500ZM837.500 218H840.500V222.500H842.500L839 226 835.500 222.500H837.500Z" fill="#ea3a40"/>
  <path d="M814.500 241L818 245H816V250H813V245H811ZM833.500 238L837 242H835V247H832V242H830Z" fill="#0faf30"/>
  <!-- dialog toolbar -->
  <path d="M293.500 281V313M356.500 281V313M427.500 281V313M502.500 281V313M568.500 281V313M634.500 281V313M695.500 281V313" stroke="#7f99a5"/>
  <use href="#doc" x="254" y="285" width="21" height="27"/>
  <path d="M250 287H256V283H261V287H265V292H261V296H256V292H250Z" fill="#fff" stroke="#6a767c"/>
  <g opacity=".35"><use href="#doc" x="315" y="285" width="19" height="26"/><path d="M327 306L339 292 342 295 331 308 325 311Z" fill="#e8dc92" stroke="#8a979e"/>
  <use href="#doc" x="378" y="282" width="18" height="24"/><use href="#doc" x="386" y="287" width="21" height="27"/>
  <path d="M455 296H479L476 314H458Z" fill="#d5dfe3" stroke="#6f7f86"/><ellipse cx="467" cy="292" rx="12" ry="3" fill="#b7c5cb" stroke="#6f7f86"/><path d="M462 287C462 283 472 283 472 287" fill="none" stroke="#4a5b63" stroke-width="2"/><path d="M462 298V312M467 298V312M472 298V312" stroke="#6f7f86"/></g>
  <use href="#doc" x="520" y="282" width="20" height="26"/>
  <rect x="527.500" y="292.500" width="25" height="18" fill="#fff" stroke="#6a767c"/><path d="M530 307L535 299 539 304 545 296 550 295" fill="none" stroke="#18b030"/><path d="M533 309L538 303 541 306" fill="none" stroke="#d63b40"/><path d="M533 311H546V314H533Z" fill="#8a979e"/><path d="M534 289H541V296H546L537.500 306 529 296H534Z" fill="#18b030"/>
  <g opacity=".35"><rect x="586.500" y="293.500" width="24" height="18" fill="#fff" stroke="#6a767c"/><path d="M589 307L594 299 598 304 604 296" fill="none" stroke="#18b030"/><path d="M592 312H605V315H592Z" fill="#8a979e"/><use href="#doc" x="603" y="282" width="15" height="20"/><path d="M594 298C597 291 602 289 606 289V286L613 292 606 298V295C602 295 598 295 594 298Z" fill="#18b030"/></g>
  <use href="#doc" x="652" y="283" width="16" height="21"/><use href="#doc" x="655" y="285" width="16" height="21"/><use href="#doc" x="658" y="287" width="16" height="21"/><use href="#badge" x="665" y="296" width="16" height="16"/>
  <rect x="711" y="283" width="22" height="18" fill="#3c454c"/><path d="M712 285H732M712 299H732" stroke="#fff" stroke-width="2" stroke-dasharray="2 1.500"/><path d="M720 288L727 292 720 296Z" fill="#fff"/><use href="#badge" x="725" y="296" width="16" height="16"/>
  <!-- search clear -->
  <path d="M586 343L593 350M593 343L586 350" stroke="#b4bfc5" stroke-width="3"/>
  <!-- collapse strip -->
  <rect x="610.500" y="338.500" width="7" height="294" rx="3.500" fill="#a9c8d6" stroke="#7f9aa6"/>
  <path d="M616 342L612 345.500 616 349ZM612 352L616 355.500 612 359Z" fill="#1a2328"/>
  <path d="M612 480H616M612 482H616M612 484H616M612 486H616" stroke="#7f9aa6"/>
  <!-- list heading -->
  <rect x="245.500" y="404.500" width="9" height="9" fill="#eef2f4" stroke="#7b949f"/><path d="M247.500 409H252.500" stroke="#2a3338"/>
  <path d="M475 408.500H581" stroke="#9aa6ac"/>
  <!-- stars -->
  <g transform="translate(0,-1)">
  <use href="#st" x="569" y="372" width="13" height="13"/><use href="#st" x="569" y="388" width="13" height="13"/>
  <use href="#st" x="569" y="418" width="13" height="13"/><use href="#st" x="569" y="434" width="13" height="13"/><use href="#st" x="569" y="450" width="13" height="13"/><use href="#st" x="569" y="466" width="13" height="13"/><use href="#st" x="569" y="482" width="13" height="13"/><use href="#st" x="569" y="498" width="13" height="13"/>
  <use href="#st" x="569" y="530" width="13" height="13"/><use href="#st" x="569" y="546" width="13" height="13"/><use href="#st" x="569" y="562" width="13" height="13"/><use href="#st" x="569" y="578" width="13" height="13"/><use href="#st" x="569" y="594" width="13" height="13"/><use href="#st" x="569" y="610" width="13" height="13"/>
  </g>
  <path d="M575.500 513.500L577.300 517.600 581.500 518 578.400 520.900 579.300 525.200 575.500 523 571.700 525.200 572.600 520.900 569.500 518 573.700 517.600Z" fill="#8fb0e4"/>
  <!-- scrollbar -->
  <rect x="584.500" y="370.500" width="14" height="15" rx="2" fill="#d2e2ea" stroke="#7f9aa6"/><path d="M588 380H595L591.500 376Z" fill="#1a2328"/>
  <rect x="584.500" y="403.500" width="14" height="32" rx="2" fill="#d2e2ea" stroke="#7f9aa6"/><path d="M588 417H595M588 419H595M588 421H595" stroke="#7f9aa6"/>
  <rect x="584.500" y="617.500" width="14" height="14" rx="2" fill="#d2e2ea" stroke="#7f9aa6"/><path d="M588 623H595L591.500 627Z" fill="#1a2328"/>
  <!-- hand-drawn annotation -->
  <path d="M347 415L363 406C362 400 362 395 363 393 368 389 370 386 369 384 362 374 352 366 341 362 325 358 305 357 280 358 255 360 225 367 198 371 192 377 189 385 190 391 200 394 225 402 263 407 290 411 330 412 361 410" fill="none" stroke="#0606e6" stroke-width="2" stroke-linejoin="round" stroke-linecap="round"/>
</svg>
</body></html>
